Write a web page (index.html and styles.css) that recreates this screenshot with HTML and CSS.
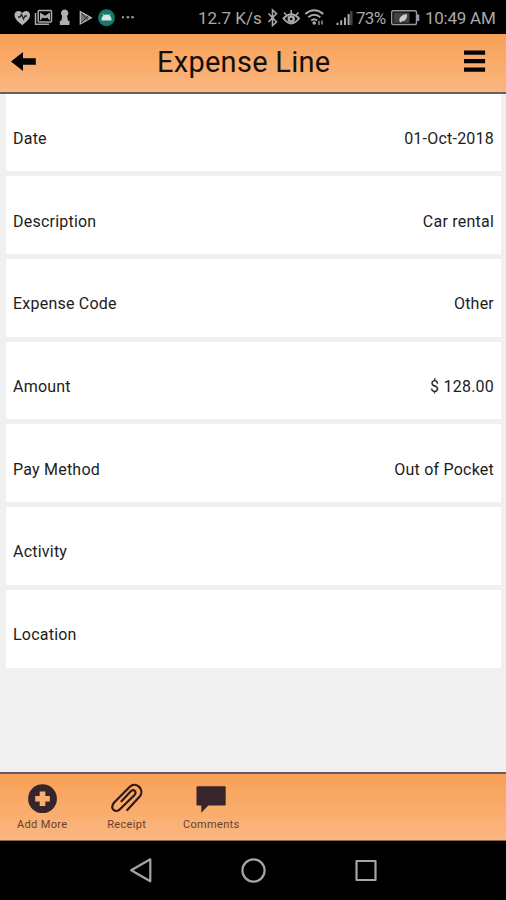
FILE: index.html
```html
<!DOCTYPE html>
<html lang="en">
<head>
<meta charset="utf-8">
<title>Expense Line</title>
<link rel="stylesheet" href="styles.css">
</head>
<body>
<div class="status">
  <svg class="notifications" width="124" height="34" viewBox="0 0 124 34">
    <path fill="#b5b5b5" d="M22.300 25.200C17.500 21.200 14.500 18.500 14.500 15C14.500 10.500 20 9.500 22.300 13C24.600 9.500 30 10.500 30 15C30 18.500 27 21.200 22.300 25.200Z"/>
    <path fill="none" stroke="#222" stroke-width="1.300" d="M18 17h2l1.500-2.500 2 4.500 1.500-3h2"/>
    <path fill="none" stroke="#aaa" stroke-width="1.500" d="M35.500 13v11.300h13.500"/>
    <rect x="38.200" y="10.500" width="13.300" height="11.500" rx="1" fill="none" stroke="#aaa" stroke-width="1.500"/>
    <path fill="#aaa" d="M40 12.500l5 3.300 5-3.300v8l-3-3-2 1-2-1-3 3z"/>
    <path fill="#b0b0b0" d="M64.600 9.500a3.700 3.700 0 0 1 2.500 6.500l.9 4.700h1.500V25h-9.700v-4.300h1.500l.9-4.700a3.700 3.700 0 0 1 2.400-6.500z"/>
    <path fill="#777" stroke="#bbb" stroke-width="1.300" d="M80.300 11.500v12.500l11-6.300z"/>
    <path fill="none" stroke="#333" stroke-width="1" d="M81 13l7 6.500M81 23l7-7"/>
    <circle cx="106.500" cy="17.700" r="8.500" fill="#16796b"/>
    <path fill="#d9e5e2" d="M101.500 20.500v-1a5 5 0 0 1 10 0v1z"/>
    <path stroke="#d9e5e2" d="M103 14l1.500 2M110 14l-1.500 2"/>
    <path stroke="#a4a4a4" stroke-width="2" d="M122 17.300h2"/>
  </svg>
  <svg class="more" width="10" height="34" viewBox="124 0 10 34"><path fill="none" stroke="#a4a4a4" stroke-width="2" d="M126.600 17.300h2.600M131.200 17.300h2.600"/></svg>
  <span class="speed">12.7 K/s</span>
  <svg class="radios" width="92" height="34" viewBox="264 0 92 34">
    <g fill="none" stroke="#aaa">
      <path stroke-width="1.600" d="M268.500 13.500l8 8.500-4 3.500V10l4 3.500-8 8.500"/>
      <path stroke-width="2" d="M283.500 18.500q7.700-8.500 15.500 0q-7.800 10-15.500 0z"/>
      <circle cx="291.200" cy="18.900" r="2.500" stroke-width="2.500"/>
      <path stroke-width="1.500" d="M284 12.500l2.500 2.500M291.200 10v4M298.500 12.500l-2.500 2.500"/>
      <path stroke-width="2" d="M305.300 14q9-7.500 18 0M308.300 17.300q6-5 12 0M311.200 20.500q3-2.500 6 0"/>
      <path stroke-width="1.300" d="M319 25v-4M322 20.500v4"/>
      <path stroke-width="2" d="M337.500 25v-2.300M341.200 25v-4.700M345 25v-7.500M348.600 25V14"/>
      <path stroke="#444" stroke-width="2.500" d="M351.300 25V11"/>
    </g>
    <circle cx="314.200" cy="23" r="1.800" fill="#aaa"/>
  </svg>
  <span class="percent">73%</span>
  <svg class="battery" width="30" height="34" viewBox="390 0 30 34">
    <rect x="391.700" y="10.800" width="24.800" height="13.700" rx="1.500" fill="none" stroke="#999" stroke-width="1.400"/>
    <rect x="393.500" y="12.500" width="16" height="10.300" fill="#424242"/>
    <path fill="#999" d="M417 14.500h2.300v6.500H417z"/>
    <path fill="#ccc" d="M399.500 21.500q-1-6.500 7.500-7.500q.5 7-5 7.200l-1.600 1.300z"/>
  </svg>
  <span class="clock">10:49 AM</span>
</div>
<header class="bar header">
  <svg class="back" width="26" height="22" viewBox="0 0 26 22"><path d="M0 11.500L12 2v6.300H24.800v6.500H12v6.200z"/></svg>
  <h1>Expense Line</h1>
  <svg class="menu" width="22" height="22" viewBox="0 0 22 22"><path d="M0 .5h21.100v4.200H0zM0 9h21.100v4.200H0zM0 17.500h21.100v4.200H0z"/></svg>
</header>
<main>
  <div class="row"><span>Date</span><span>01-Oct-2018</span></div>
  <div class="row"><span>Description</span><span>Car rental</span></div>
  <div class="row"><span>Expense Code</span><span>Other</span></div>
  <div class="row"><span>Amount</span><span>$ 128.00</span></div>
  <div class="row"><span>Pay Method</span><span>Out of Pocket</span></div>
  <div class="row"><span>Activity</span></div>
  <div class="row"><span>Location</span></div>
</main>
<footer class="bar footer">
  <div class="tool">
    <svg width="32" height="32" viewBox="0 0 32 32"><circle cx="16.500" cy="15.700" r="14.400" fill="#38252c"/><path fill="#f9b06f" d="M13.700 8.400h5.600v4.500h4.500v5.600h-4.500V23h-5.600v-4.500H9.200v-5.600h4.500z"/></svg>
    <span>Add More</span>
  </div>
  <div class="tool">
    <svg width="34" height="32" viewBox="0 0 34 32"><path fill="none" stroke="#2c191d" stroke-width="2.200" stroke-linecap="round" d="M17.300 27L29.700 13.500C35 7 26.500-2.500 19.500 4L4.200 19.500C-1 26 6 30.500 10.200 26L24.300 12.200C27.500 8.500 23.500 5.500 20.300 8.700L11.500 18.300"/></svg>
    <span>Receipt</span>
  </div>
  <div class="tool">
    <svg width="32" height="32" viewBox="0 0 32 32"><path fill="#38252c" d="M2.500 3.200h27.200q1 0 1 1v17.300q0 1-1 1H13.300L6.300 29.700v-7.200H2.500q-1 0-1-1V4.200q0-1 1-1z"/></svg>
    <span>Comments</span>
  </div>
</footer>
<nav>
  <svg width="26" height="28" viewBox="0 0 26 28"><path d="M23.300 2.300v22L4.200 13.300z"/></svg>
  <svg width="28" height="28" viewBox="0 0 28 28"><circle cx="14.500" cy="13.500" r="11.100"/></svg>
  <svg width="26" height="28" viewBox="0 0 26 28"><path d="M3.500 4h19v19h-19z"/></svg>
</nav>
</body>
</html>
```
FILE: styles.css
```css
* { box-sizing: border-box; }
body {
  margin: 0;
  width: 506px;
  height: 900px;
  display: flex;
  flex-direction: column;
  overflow: hidden;
  background: #f0f0f0;
  color: #1c1c1c;
  font-family: Roboto, sans-serif;
}
svg { display: block; flex: none; }
.status {
  height: 34px;
  flex: none;
  display: flex;
  align-items: center;
  background: #000;
  color: #a9a9a9;
  font-size: 17px;
  line-height: 34px;
  white-space: nowrap;
}
.status span { padding-top: 2px; }
.speed { width: 66px; margin-left: 64px; letter-spacing: 0; }
.percent { width: 34px; letter-spacing: -.7px; }
.clock { margin-left: 5px; letter-spacing: -.25px; }
.bar { background: linear-gradient(#f8a055, #fab780); flex: none; }
.header {
  height: 60px;
  display: flex;
  align-items: center;
  padding: 0 20px 4px 11px;
  border-bottom: 2px solid #65605b;
}
.header svg { fill: #050505; }
.menu { margin-left: auto; }
h1 {
  margin: 0 0 0 120px;
  padding-top: 2px;
  color: #14100d;
  font-size: 29px;
  line-height: 40px;
  font-weight: 400;
  letter-spacing: .27px;
}
main {
  flex: 1;
  display: flex;
  flex-direction: column;
  gap: 5px;
  padding: 0 5px 0 6px;
}
.row {
  flex: none;
  height: 77.7px;
  display: flex;
  align-items: center;
  justify-content: space-between;
  padding: 11.7px 7px 0;
  background: #fff;
  font-size: 16px;
  letter-spacing: .22px;
}
.row:first-child { height: 77.4px; }
.footer {
  height: 69px;
  display: flex;
  border-top: 2px solid #655f5d;
  border-bottom: 1px solid #8d6848;
}
.tool {
  width: 84.5px;
  display: flex;
  flex-direction: column;
  align-items: center;
  padding-top: 9px;
  color: #674131;
  font-size: 11px;
  line-height: 20px;
  letter-spacing: .35px;
  white-space: nowrap;
}
nav {
  height: 59px;
  flex: none;
  display: flex;
  align-items: center;
  justify-content: center;
  gap: 86px;
  background: #000;
}
nav svg { fill: none; stroke: #a5a5a5; stroke-width: 2.2; stroke-linejoin: round; }
```
